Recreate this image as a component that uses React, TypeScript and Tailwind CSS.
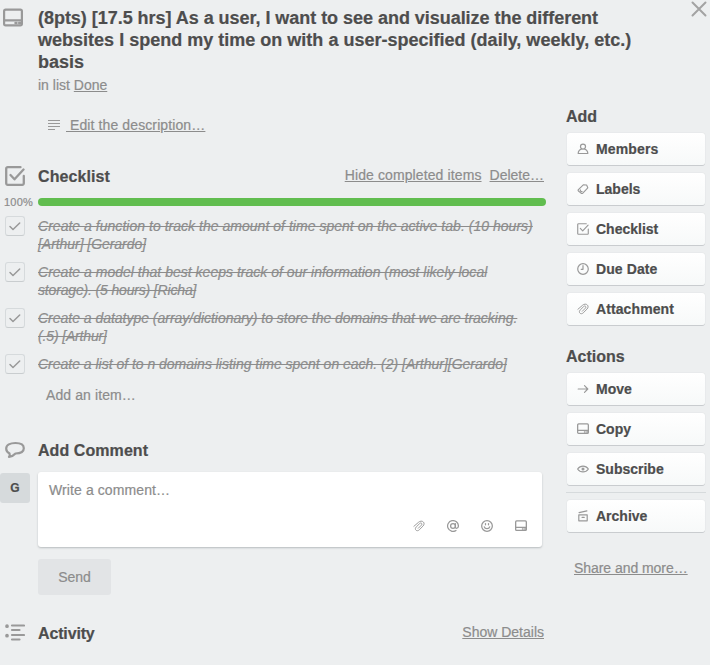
import type { ReactNode } from "react";

function Icon({ size, children, w = 1.5, box = 20 }: { size: number; children: ReactNode; w?: number; box?: number }) {
  return (
    <svg width={size} height={size} viewBox={`0 0 ${box} ${box}`} fill="none" stroke="#999" strokeWidth={w} strokeLinecap="round" strokeLinejoin="round" className="shrink-0">
      {children}
    </svg>
  );
}

function CardIcon({ size, w }: { size: number; w: number }) {
  return (
    <Icon size={size} w={w}>
      <rect x="1.100" y="1.600" width="17.800" height="15.800" rx="1.600" />
      <path d="M1.200 12.400h17.600" />
      <path d="M12.600 15h.8M16.300 15h1.200" strokeWidth={w * 1.2} />
    </Icon>
  );
}

function CheckIcon({ size, w }: { size: number; w: number }) {
  return (
    <Icon size={size} w={w}>
      <path d="M15.500 1.200H2.700a1.500 1.500 0 0 0-1.500 1.500v14.600a1.500 1.500 0 0 0 1.500 1.500h14.600a1.500 1.500 0 0 0 1.500-1.500V10" />
      <path d="M5.500 9l4 4.300L18.500 3.500" />
    </Icon>
  );
}

function ClipIcon({ size }: { size: number }) {
  return (
    <Icon size={size} w={1.6}>
      <path d="M1.500 10.500L9 4c3-2.800 6.500-2.500 8.200-.7 1.700 1.700 1.800 4.200-.4 6.700l-6.500 6.500c-1.800 1.700-4 1.800-5.400.4s-1.300-3.500.4-5.200l6-5.900c1-1 2.400-1 3.100-.2s.7 1.900-.2 2.800l-5.400 5.400" />
    </Icon>
  );
}

const icons: Record<string, ReactNode> = {
  Members: (
    <Icon size={12} w={2}>
      <circle cx="10" cy="6" r="4.200" />
      <path d="M7.500 10C3.500 11.500 2 14 2 17.500h16c0-3.500-1.500-6-5.500-7.500" />
    </Icon>
  ),
  Labels: (
    <Icon size={12} w={1.9}>
      <path d="M2.300 11l8.200-7.800 5.500.2L18 8l-8.300 8.800c-.9.900-2.200 1-3 .1l-4.300-3.600c-.8-.7-.8-1.600-.1-2.300z" />
      <path d="M5.500 11.500c0 2 1 3 3 2.800" />
    </Icon>
  ),
  Checklist: <CheckIcon size={12} w={1.9} />,
  "Due Date": (
    <Icon size={12} w={2}>
      <circle cx="10" cy="10" r="8.800" />
      <path d="M10 4.500V10.500H7" />
    </Icon>
  ),
  Attachment: <ClipIcon size={12} />,
  Move: (
    <Icon size={12} w={2}>
      <path d="M2 10h16M12.500 4.500L18 10l-5.500 5.500" />
    </Icon>
  ),
  Copy: <CardIcon size={12} w={2.1} />,
  Subscribe: (
    <Icon size={12} w={1.9}>
      <path d="M1 10c4.500-6.500 13.500-6.500 18 0-4.500 6.500-13.500 6.500-18 0z" />
      <circle cx="10" cy="10" r="1.600" fill="#999" />
    </Icon>
  ),
  Archive: (
    <Icon size={12} w={2}>
      <path d="M3 8h14v10H3zM3.500 4.500l13-3M8.500 12.300h3.500" />
    </Icon>
  ),
};

function SideButton({ label, spacing = "" }: { label: string; spacing?: string }) {
  return (
    <button className="flex h-8 w-[138px] items-center gap-[7px] rounded-[3px] bg-linear-to-b from-white to-[#f7f9f9] pl-[10px] text-left text-[14px] font-bold text-[#4d4d4d] shadow-[0_1px_0_#c9cccf,0_0_1px_#c2c4c6]">
      {icons[label]}
      <span className={spacing}>{label}</span>
    </button>
  );
}

const items = [
  [
    { t: "Create a function to track the amount of time spent on the active tab. (10 hours)", c: "tracking-[0.027px]" },
    { t: "[Arthur] [Gerardo]", c: "tracking-[-0.05px]" },
  ],
  [
    { t: "Create a model that best keeps track of our information (most likely local", c: "tracking-[0.015px]" },
    { t: "storage). (5 hours) [Richa]", c: "tracking-[-0.16px]" },
  ],
  [
    { t: "Create a datatype (array/dictionary) to store the domains that we are tracking.", c: "tracking-[-0.02px]" },
    { t: "(.5) [Arthur]", c: "tracking-[-0.15px]" },
  ],
  [{ t: "Create a list of to n domains listing time spent on each. (2) [Arthur][Gerardo]", c: "tracking-[-0.015px]" }],
];

export default function App() {
  return (
    <div className="relative flex h-[665px] w-[710px] gap-[21px] overflow-hidden bg-[#edeff0] font-['Liberation_Sans',Arial,sans-serif] text-[14px] leading-[18px] text-[#8c8c8c] [-webkit-text-stroke:0.2px]">
      <main className="flex w-[546px] shrink-0 flex-col">
        <header className="flex h-[94px] pt-[7px]">
          <div className="w-[38px] shrink-0 pt-px pl-[3px]">
            <CardIcon size={20} w={2.2} />
          </div>
          <div>
            <h1 className="text-[18px] leading-[22px] font-bold whitespace-nowrap text-[#4d4d4d]">
              <span className="block tracking-[-0.035px]">(8pts) [17.5 hrs] As a user, I want to see and visualize the different</span>
              <span className="block tracking-[0.01px]">websites I spend my time on with a user-specified (daily, weekly, etc.)</span>
              <span className="block">basis</span>
            </h1>
            <p className="pt-[3px]">in list <a className="underline underline-offset-1">Done</a></p>
          </div>
        </header>

        <div className="mt-[22px] flex h-[18px] items-center pl-[47px]">
          <svg width="14" height="12" stroke="#999" strokeWidth="1.200" className="mr-[5px]">
            <path d="M1 1.500h12M1 4.500h12M1 7.500h12M1 10.500h7" />
          </svg>
          <a className="tracking-[0.11px] whitespace-pre underline underline-offset-1"> Edit the description…</a>
        </div>

        <div className="mt-[31px] flex h-[21px] items-center">
          <div className="w-[38px] pl-[5px]"><CheckIcon size={20} w={2.3} /></div>
          <h2 className="relative top-px grow text-[16px] font-bold tracking-[0.1px] text-[#4d4d4d]">Checklist</h2>
          <a className="mr-2 -mt-px tracking-[0.11px] underline underline-offset-1">Hide completed items</a>
          <a className="mr-[2px] -mt-px underline underline-offset-1">Delete…</a>
        </div>

        <div className="mt-2 flex h-4 items-center">
          <span className="w-[38px] pl-1 text-[11px] tracking-[0.2px]">100%</span>
          <div className="h-2 grow rounded-full bg-[#61bd4f]" />
        </div>

        <ul className="mt-[7px] flex flex-col gap-[10px]">
          {items.map((lines, i) => (
            <li key={i} className="flex">
              <div className="-mt-px -mb-px ml-[5px] mr-[13px] flex size-5 items-center justify-center rounded-[3px] border border-[#d6dadc] border-b-[#c9cdcf]">
                <Icon size={14} w={1.5} box={14}><path d="M2 7.500l3 3L11.700 4" /></Icon>
              </div>
              <p className="whitespace-nowrap italic line-through">
                {lines.map((l) => (
                  <span key={l.t} className={`block ${l.c}`}>{l.t}</span>
                ))}
              </p>
            </li>
          ))}
        </ul>
        <p className="mt-[13px] pl-[46px] tracking-[0.1px]">Add an item…</p>

        <div className="mt-[36px] flex h-5 items-center">
          <div className="w-[38px] pl-[5px]">
            <Icon size={20} w={2.2}>
              <path d="M4.500 13.500C2 12 1.200 10.500 1.200 8.700c0-3.500 3.800-5.700 9.300-5.700s8.300 2 8.300 5.300-3.300 5.200-8.300 5.200c-1.500 1.700-3.500 3-6.500 3.300 1-1 1-2 .5-3.300z" />
            </Icon>
          </div>
          <h2 className="relative top-px text-[16px] font-bold tracking-[0.07px] text-[#4d4d4d]">Add Comment</h2>
        </div>
        <div className="mt-3 flex h-[75px]">
          <div className="mt-px mr-2 flex size-[30px] items-center justify-center rounded-[3px] bg-[#d6dadc] text-[12px] font-bold text-[#4d4d4d]">G</div>
          <div className="flex w-[504px] flex-col justify-between rounded-[3px] bg-white pt-[9px] pr-[15px] pb-[15px] pl-[11px] shadow-[0_1px_2px_#b8bcbe]">
            <p className="tracking-[0.1px]">Write a comment…</p>
            <div className="flex justify-end gap-[22px]">
              <ClipIcon size={12} />
              <Icon size={12} w={2.1}>
                <circle cx="10" cy="10" r="4" />
                <path d="M14 6v5.500c0 3.500 5 3 5-1.500a9 9 0 1 0-4 7.500" />
              </Icon>
              <Icon size={12} w={2.1}>
                <circle cx="10" cy="10" r="8.900" />
                <path d="M5.500 11.500c1 4 8 4 9 0M7.500 6v2M12.500 6v2" />
              </Icon>
              <CardIcon size={12} w={2.2} />
            </div>
          </div>
        </div>
        <button className="mt-3 ml-[38px] h-9 w-[73px] rounded-[3px] bg-[#e2e4e6]">Send</button>

        <div className="mt-[28px] flex h-5 items-center">
          <div className="w-[38px] pl-[5px]">
            <Icon size={20} w={2.2}>
              <path d="M7 2.500h12M7 7h7.500M7 12h12M7 16.500h7.500" />
              <path d="M2 3.200h.01M2 12.700h.01" strokeWidth="3.700" />
            </Icon>
          </div>
          <h2 className="relative top-px grow text-[16px] font-bold tracking-[-0.15px] text-[#4d4d4d]">Activity</h2>
          <a className="mr-[2px] -mt-[3px] underline underline-offset-1">Show Details</a>
        </div>
      </main>

      <aside className="w-[140px] pt-[108px]">
        <h3 className="-ml-px mb-[7px] text-[16px] font-bold text-[#4d4d4d]">Add</h3>
        <div className="flex flex-col gap-2">
          <SideButton label="Members" spacing="tracking-[0.15px]" />
          <SideButton label="Labels" />
          <SideButton label="Checklist" />
          <SideButton label="Due Date" spacing="tracking-[0.1px]" />
          <SideButton label="Attachment" spacing="tracking-[0.1px]" />
        </div>
        <h3 className="-ml-px mt-[23px] mb-[7px] text-[16px] font-bold text-[#4d4d4d]">Actions</h3>
        <div className="flex flex-col gap-2">
          <SideButton label="Move" />
          <SideButton label="Copy" />
          <SideButton label="Subscribe" />
        </div>
        <hr className="mt-[7px] mb-[7px] -ml-px w-[140px] border-[#d6dadc]" />
        <SideButton label="Archive" />
        <a className="mt-[27px] ml-[7px] block tracking-[-0.05px] underline underline-offset-1">Share and more…</a>
      </aside>

      <svg width="16" height="16" viewBox="0 0 16 16" className="absolute top-[1px] left-[691px]" stroke="#a3a3a3" strokeWidth="2" strokeLinecap="round">
        <path d="M1.500 1.500l13 13M14.500 1.500l-13 13" />
      </svg>
    </div>
  );
}
